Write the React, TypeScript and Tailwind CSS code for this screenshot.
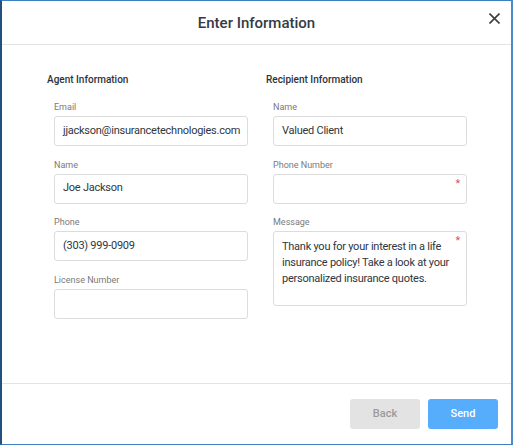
interface FieldProps {
    label: string;
    value?: string;
    required?: boolean;
    multiline?: boolean;
}

const Field = ({ label, value, required, multiline }: FieldProps) => {
    return (
        <div className="mb-[12.5px] w-[194px]">
            <div className="mb-[3px] text-[9px] leading-[12px] text-[#7a7a7a]">{label}</div>
            <div
                className={`relative rounded-[3px] border border-[#dcdcdc] bg-white px-2 text-[11px] tracking-[-0.25px] text-[#2f3640] ${
                    multiline ? 'h-[75px] pt-[7px] pr-[14px] leading-[16px]' : 'flex h-[30px] items-center'
                }`}
            >
                {value}
                {required && (
                    <span className="absolute top-[3px] right-[6px] text-[11px] leading-none text-[#e05555]">*</span>
                )}
            </div>
        </div>
    );
};

const App = () => {
    return (
        <div className="h-[445px] w-[513px] overflow-hidden border-t border-r-2 border-b border-l-2 border-t-[#3d7fbf] border-r-[#4b8bc9] border-b-[#3d7fbf] border-l-[#22507f] bg-white font-['Roboto',sans-serif]">
            <div className="flex h-full flex-col">
                {/* Header */}
                <div className="relative flex h-[44px] items-center justify-center border-b border-[#e3e3e3] pt-[1px]">
                    <h1 className="text-[15px] font-medium text-[#333b45]">Enter Information</h1>
                    <button className="absolute top-[12px] right-[11px] text-[#3a3f47]">
                        <svg width="11" height="11" viewBox="0 0 11 11" fill="none" stroke="currentColor" strokeWidth={1.6}>
                            <path d="M0.5 0.5L10.5 10.5M10.5 0.5L0.5 10.5" />
                        </svg>
                    </button>
                </div>

                {/* Body */}
                <div className="flex flex-1 pt-[29px] pl-[45px]">
                    <div className="w-[219px]">
                        <h2 className="mb-[15px] text-[10px] leading-[12px] font-medium text-[#2c323a]">Agent Information</h2>
                        <div className="pl-[7px]">
                            <Field label="Email" value="jjackson@insurancetechnologies.com" />
                            <Field label="Name" value="Joe Jackson" />
                            <Field label="Phone" value="(303) 999-0909" />
                            <Field label="License Number" />
                        </div>
                    </div>
                    <div className="w-[219px]">
                        <h2 className="mb-[15px] text-[10px] leading-[12px] font-medium text-[#2c323a]">Recipient Information</h2>
                        <div className="pl-[7px]">
                            <Field label="Name" value="Valued Client" />
                            <Field label="Phone Number" required />
                            <Field
                                label="Message"
                                required
                                multiline
                                value="Thank you for your interest in a life insurance policy! Take a look at your personalized insurance quotes."
                            />
                        </div>
                    </div>
                </div>

                {/* Footer */}
                <div className="flex h-[61px] items-start justify-end gap-2 border-t border-[#e3e3e3] pt-[15px] pr-[13px]">
                    <button className="h-[30px] w-[70px] rounded-[3px] bg-[#e3e3e3] text-[11px] font-medium text-[#9b9b9b]">
                        Back
                    </button>
                    <button className="h-[30px] w-[70px] rounded-[3px] bg-[#55adfc] text-[11px] font-medium text-white">
                        Send
                    </button>
                </div>
            </div>
        </div>
    );
};

export default App;
